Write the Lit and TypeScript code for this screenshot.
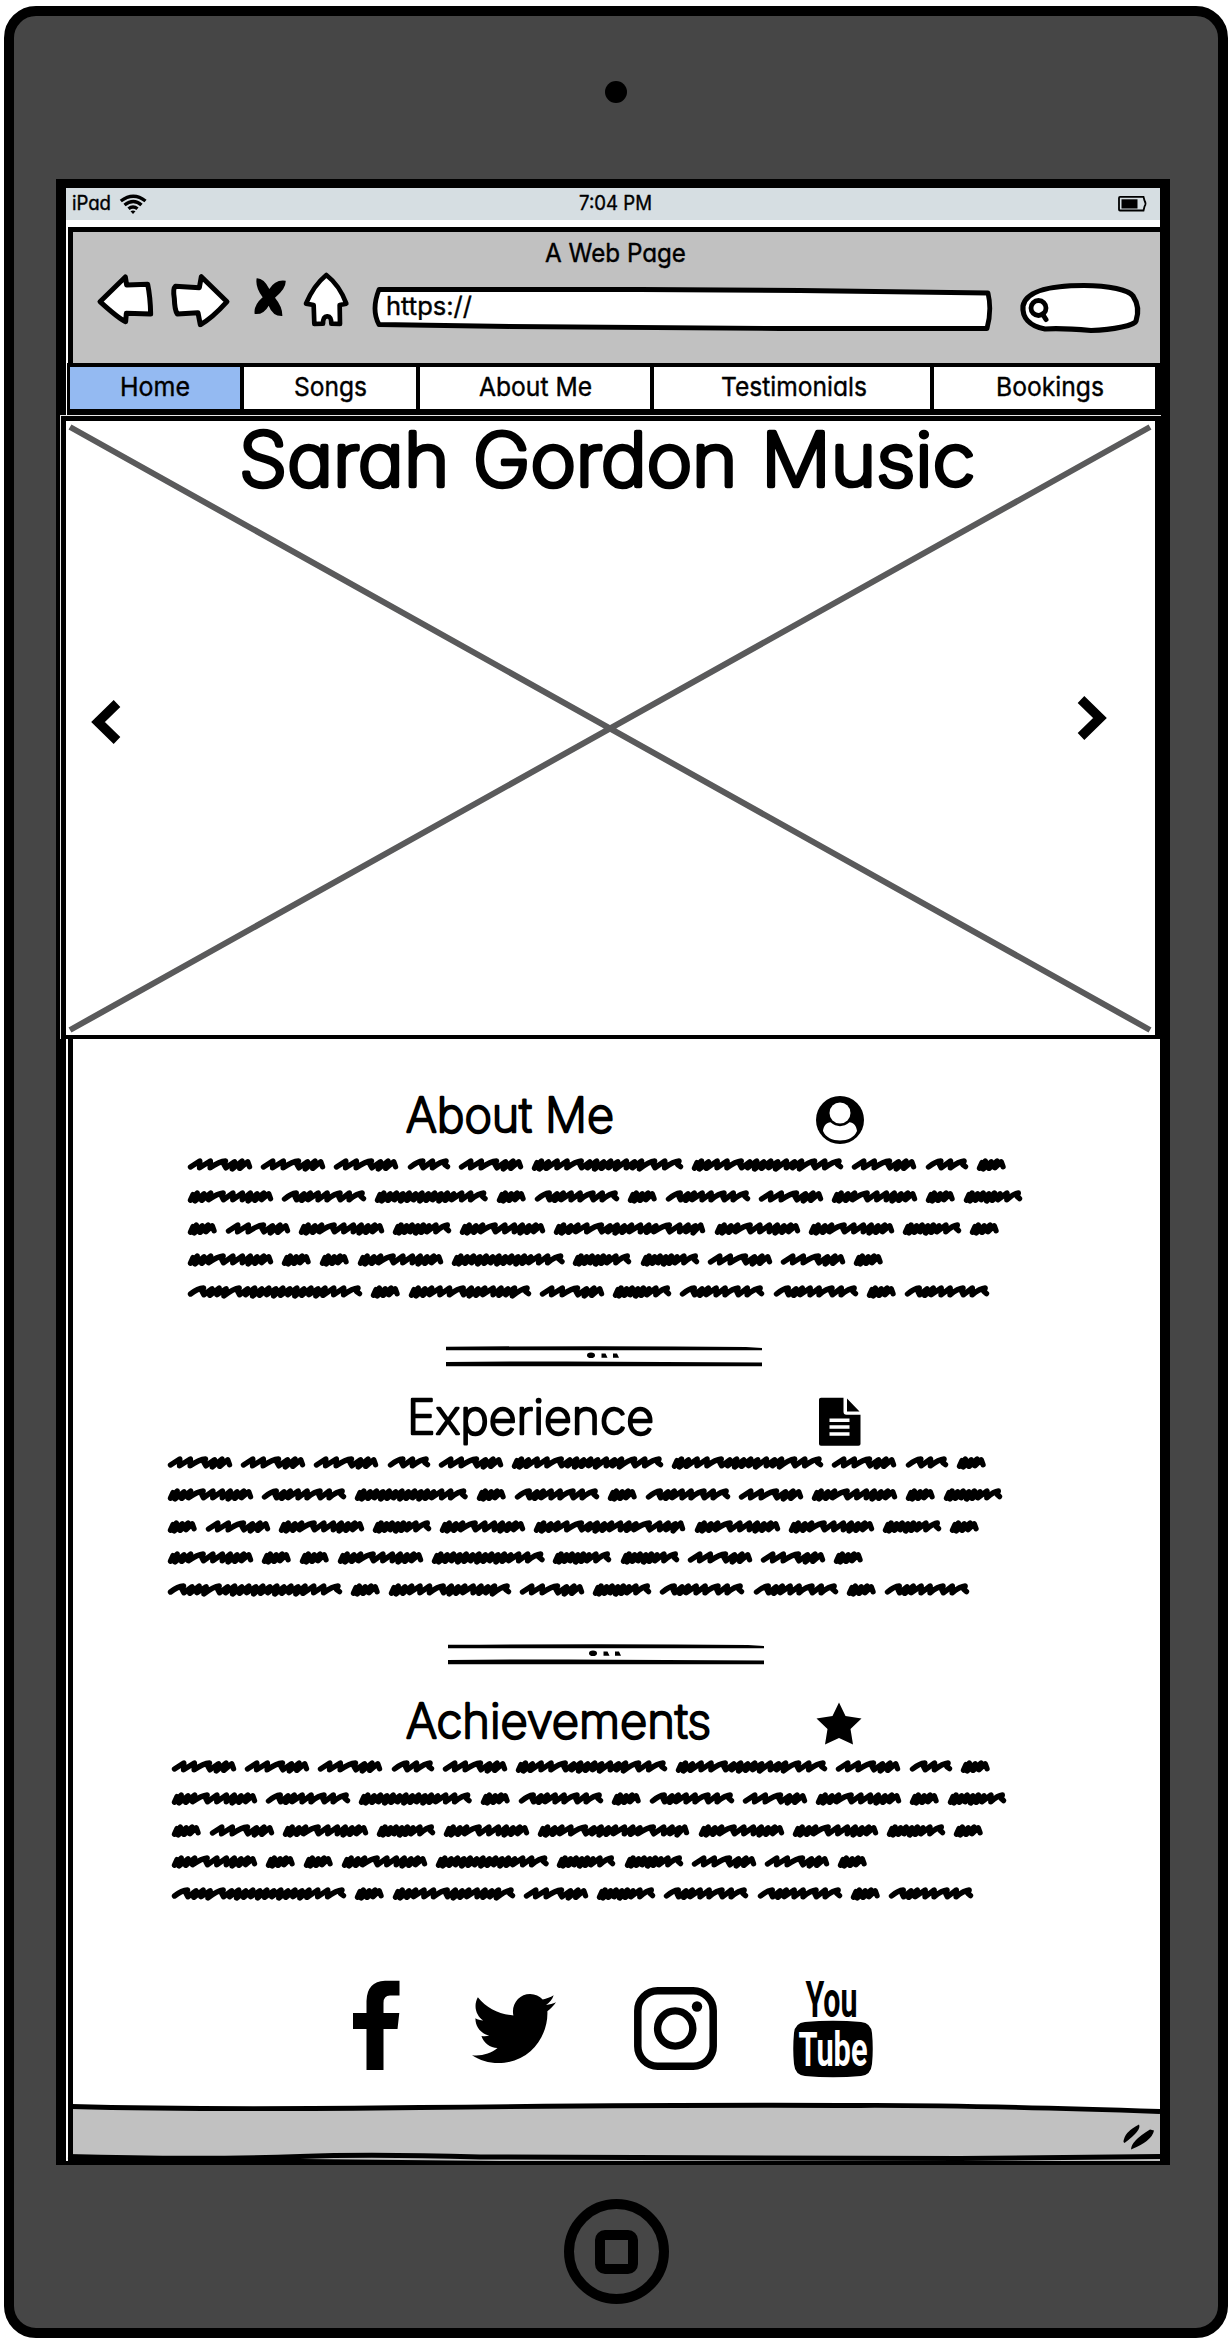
import { LitElement, html, svg, css } from "lit";
import { customElement } from "lit/decorators.js";

/* Draws a label as SVG text set to an exact width. */
const label = (text: string, width: number, size: number, cls = "") => html`
  <svg class="label ${cls}" width=${width} height=${size} viewBox="0 0 ${width} ${size}">
    <text x="0" y=${size * 0.75} font-size=${size} textLength=${width} lengthAdjust="spacingAndGlyphs">${text}</text>
  </svg>`;

/* Scribble strokes: l = slanted stroke, h = humped stroke, d = dense stroke. */
const WORDS: Record<string, [string, number]> = {
  A: ["llhddd", 64],
  B: ["hlh", 42],
  C: ["ddllhdddddlddhlh", 151],
  D: ["hddllhlh", 84],
  E: ["dddhlldddd", 85],
  F: ["ddddddddddddllh", 112.5],
  G: ["dddd", 28.5],
  H: ["ddddddlh", 58],
  I: ["dddlhddddlddhlddd", 151],
  J: ["hdddhddddddddddddllh", 174],
  K: ["dddllhdddldddh", 122],
};

const LINES = ["AAABACCABG", "EDFGDGDAEGH", "GAEHEIEEHG", "EGGEFHHAAG", "JGKAHDDGD"];

const scribble = (key: string) => {
  const [strokes, width] = WORDS[key];
  const pitch: Record<string, number> = { l: 8.2, h: 12, d: 5.8 };
  const total = [...strokes].reduce((s, c) => s + pitch[c], 0);
  const k = (width - 5) / total;
  let x = 2.5;
  let d = strokes[0] === "d" ? `M${x + 2.5} 4.6L${x} 10.2` : `M${x} 9`;
  [...strokes].forEach((c, i) => {
    const w = pitch[c] * k;
    const last = i === strokes.length - 1;
    if (c === "d") {
      const top = 3 + (i % 2) * 0.8;
      const low = 11 - (i % 3) * 0.6;
      d += last ? `L${x + w - 1.8} ${top}L${x + w} 8.6` : `L${x + w} ${top}L${x + w - 2.2} ${low}`;
    } else if (c === "l") {
      d += `L${x + w * 0.88} 3L${x + w * (last ? 1 : 0.86)} ${last ? 8.6 : 9.8}`;
    } else {
      d += `Q${x + w * 0.5} 3.4 ${x + w * 0.9} 3L${x + w * 0.8} 6.500L${x + w * (last ? 1 : 0.92)} ${last ? 8.6 : 9.8}`;
    }
    x += w;
  });
  return html`<svg width=${width} height="14" viewBox="0 0 ${width} 14">
    <path d=${d} fill="none" stroke="#000" stroke-width="5.400" stroke-linecap="round" stroke-linejoin="round" />
  </svg>`;
};

const paragraph = () => html`<div class="para">
  ${LINES.map((line) => html`<div class="line">${[...line].map(scribble)}</div>`)}
</div>`;

const divider = () => html`<svg width="316" height="21" viewBox="0 0 316 21">
  <path d="M0 .8Q170 -.6 300 1L316 2V4.2H0zM0 16Q60 15 120 15.6L316 16.4V20.2H0z" />
  <ellipse cx="145" cy="9.2" rx="4" ry="2.800" />
  <path d="M155.500 7.500h4l2 4.300h-6zM167 7.500h4l2 4.300h-6z" />
</svg>`;

@customElement("app-root")
export class AppRoot extends LitElement {
  static styles = css`
    :host {
      display: block;
      width: 1232px;
      height: 2342px;
      overflow: hidden;
      background: #fff;
      font-family: Inter, "Open Sans", sans-serif;
    }
    * { box-sizing: border-box; }
    svg { display: block; flex: none; overflow: visible; }
    .label {
      font-weight: 400;
      font-feature-settings: "cv11";
      fill: #000;
      stroke: #000;
      stroke-width: 0.4;
      stroke-linejoin: round;
    }
    .title { font-weight: 200; stroke-width: 4.6; word-spacing: 2px; }
    .heading { font-weight: 200; stroke-width: 2.5; }
    .device {
      width: 1224px;
      height: 2332px;
      margin: 6px 4px 0;
      border: 10px solid #000;
      border-radius: 32px;
      background: #464646;
      display: flex;
      flex-direction: column;
      align-items: center;
    }
    .camera { width: 22px; height: 22px; border-radius: 50%; background: #000; margin-top: 65px; flex: none; }
    .screen {
      width: 1114px;
      height: 1986px;
      flex: none;
      margin-top: 76px;
      margin-right: 6px;
      border: solid #000;
      border-width: 9px 10px 4px;
      background: #fff;
      display: flex;
      flex-direction: column;
    }
    .status {
      height: 32px;
      flex: none;
      background: #d6dee2;
      display: grid;
      grid-template-columns: 1fr 72px 1fr;
      padding: 7px 13px 0 14px;
    }
    .status-left { display: flex; gap: 9px; margin-left: -8px; }
    .clock { margin-left: 1px; }
    .status-right { display: flex; justify-content: flex-end; }
    .chrome {
      margin: 7px 0 0 2px;
      height: 136px;
      flex: none;
      border: solid #000;
      border-width: 5px 0 0 5px;
      background: #c1c1c1;
      padding-top: 11px;
    }
    .page-title { display: flex; margin-left: 472px; height: 29px; }
    .toolbar { display: flex; align-items: flex-start; padding-left: 24px; }
    .fwd { margin-left: 16.700px; }
    .stop { margin-left: 21.700px; }
    .house { margin-left: 15px; }
    .url { display: grid; margin: 14px 0 0 23px; }
    .url > * { grid-area: 1 / 1; }
    .url-text { margin: 9.500px 0 0 13px; }
    .find { margin: 11px 0 0 27px; }
    .nav {
      height: 52px;
      flex: none;
      margin-left: 1px;
      background: #000;
      padding: 4px 5px 6px 3px;
      display: grid;
      grid-template-columns: 170px 172px 230px 276px 1fr;
      gap: 4px;
    }
    .tab { background: #fff; display: flex; justify-content: center; padding-top: 9px; }
    .tab.active { background: #94baf2; }
    .tab:nth-child(4) { padding-left: 3px; }
    .tab:nth-child(5) { padding-left: 10px; }
    .carousel {
      height: 624px;
      flex: none;
      width: 1101px;
      margin-left: -6px;
      border: 1px solid #e8e8e8;
      border-width: 1px 0 0 1px;
      position: relative;
    }
    .frame {
      height: 623px;
      width: 1099px;
      border: solid #000;
      border-width: 5px 5px 4px 5px;
      background: #fff;
      display: grid;
    }
    .frame > * { grid-area: 1 / 1; }
    .hero { display: flex; margin: 8.500px 0 0 173px; }
    .arrows { display: flex; justify-content: space-between; align-items: flex-start; padding: 275px 49px 0 26px; }
    .arrows svg:first-child { margin-top: 4px; }
    .content {
      height: 1065px;
      flex: none;
      margin-left: 2px;
      border-left: 5px solid #000;
      background: #fff;
      display: flex;
      flex-direction: column;
      align-items: flex-start;
    }
    .about { margin-top: 57px; }
    .experience { margin-top: 30px; }
    .achievements { margin-top: 37px; }
    .head { display: flex; padding-left: 332.500px; }
    .about .head { height: 62px; }
    .experience .head { height: 59px; padding-left: 333.500px; }
    .achievements .head { height: 58px; }
    .name { width: 410.500px; }
    .about .name { width: 410px; }
    .experience .name { width: 412.500px; padding-top: 1px; }
    .about .para { margin-left: 115px; }
    .experience .para { margin-left: 95px; }
    .achievements .para { margin-left: 99px; }
    .para { height: 141px; display: flex; flex-direction: column; justify-content: space-between; }
    .line { display: flex; gap: 9.200px; }
    .rule1 { margin: 47px 0 0 373px; }
    .rule2 { margin: 47px 0 0 375px; }
    .social { display: flex; margin: 79px 0 0 280px; align-items: flex-start; }
    .tw { margin: 14px 0 0 71.500px; }
    .ig { margin: 7px 0 0 78px; }
    .yt { margin-left: 76px; }
    .yt text { font-family: Roboto, sans-serif; font-weight: 700; }
    .footer { flex: none; }
    .home {
      width: 105px;
      height: 105px;
      flex: none;
      margin-top: 34px;
      border: 10px solid #000;
      border-radius: 50%;
      display: grid;
      place-items: center;
    }
    .key { width: 43px; height: 44px; border: 10px solid #000; border-radius: 10px; }
  `;

  private tabs: [string, number][] = [
    ["Home", 70],
    ["Songs", 73],
    ["About Me", 113],
    ["Testimonials", 146],
    ["Bookings", 108],
  ];

  private icons = {
    user: svg`<svg width="49" height="49" viewBox="0 0 49 49">
      <circle cx="24" cy="24" r="24" />
      <circle cx="24" cy="17" r="10.500" fill="#fff" />
      <path d="M7 35C7.500 30 10.500 26.500 14.500 26.300Q24 34 33.500 26.300C37.500 26.500 40.500 30 41 35C38.500 41.500 31.500 44.500 24 44.500C16.500 44.500 9.500 41.500 7 35z" fill="#fff" />
    </svg>`,
    file: svg`<svg width="42" height="50" viewBox="0 0 42 50">
      <path d="M2 .8H24.500V14.500Q24.500 17.800 27.500 17.800H41.500V47Q41.500 48.800 39.500 48.800H2Q0 48.800 0 47V2.500Q0 .8 2 .8zM28 1.500L40.500 14.500H28z" />
      <path d="M10.500 23.200h20M10.500 30h20M10.500 37h20" stroke="#fff" stroke-width="3.400" />
    </svg>`,
    star: svg`<svg width="46" height="44" viewBox="0 0 46 44">
      <path d="M23 .5L29.500 14L45.500 16.500L34.500 27L37 42.500L23 36L9 42.500L11.500 27L.5 16.500L16.500 14z" />
    </svg>`,
  };

  private section(cls: string, name: string, width: number, icon: unknown) {
    return html`<section class=${cls}>
      <div class="head"><div class="name">${label(name, width, 48, "heading")}</div>${icon}</div>
      ${paragraph()}
    </section>`;
  }

  render() {
    return html`<div class="device">
      <div class="camera"></div>
      <div class="screen">
        <div class="status">
          <div class="status-left">
            ${label("iPad", 39, 20)}
            <svg width="27" height="19" viewBox="0 0 27 19">
              <g fill="none" stroke="#000" stroke-width="3.400">
                <path d="M.8 6Q13.500 -3.500 25.500 6" /><path d="M4.500 10Q13.500 3 21.500 10" />
                <path d="M8.500 13.800Q13 10 17.500 13.800" />
              </g>
              <path d="M10.500 16.200Q13 14.800 15.500 16.200L13 19z" />
            </svg>
          </div>
          <div class="clock">${label("7:04 PM", 73, 20)}</div>
          <div class="status-right">
            <svg width="29" height="17" viewBox="0 0 29 17">
              <path d="M2 1.800H25.500L26.500 5.500Q28.500 8.500 26.500 11.500L25.500 15.500H2Q1 15.500 1 14.500V3Q1 1.800 2 1.800z" fill="none" stroke="#000" stroke-width="1.800" />
              <path d="M3.500 4.300H19.500V13.500H3.500z" />
            </svg>
          </div>
        </div>
        <div class="chrome">
          <div class="page-title">${label("A Web Page", 141, 25.500)}</div>
          <div class="toolbar">
            <svg width="56.670" height="56" viewBox="140 305 170 168">
              <path d="M149 394L225 320L229 344L292 342Q300 380 301 431L228 429L226 454Q205 445 149 394z" fill="#fff" stroke="#000" stroke-width="15" stroke-linejoin="round" />
            </svg>
            <svg class="fwd" width="60" height="56" viewBox="360 305 180 168">
              <path d="M531 394L454 319L448 352L376 348Q368 355 373 385Q374 420 382 431L444 427L451 463Q485 445 531 394z" fill="#fff" stroke="#000" stroke-width="15" stroke-linejoin="round" />
            </svg>
            <svg class="stop" width="35" height="56" viewBox="605 305 105 168">
              <path d="M619 324Q640 323 657 356Q675 326 706 331Q708 355 674 382Q697 410 696 437Q667 438 655 406Q640 434 613 431Q609 405 637 381Q614 350 619 324z" />
            </svg>
            <svg class="house" width="48.330" height="56" viewBox="755 305 145 168">
              <path d="M828 314Q868 345 888 400L868 404L869 461L843 460Q843 437 831 438Q818 437 818 460L792 461L790 404L767 400Q790 345 828 314z" fill="#fff" stroke="#000" stroke-width="14" stroke-linejoin="round" />
            </svg>
            <div class="url">
              <svg width="620" height="46" viewBox="373 286 620 46">
                <path d="M379 289.500H640L800 290.500L988 293Q992 310 987 328.500H780L510 326.500L379 324.500Q371 310 379 289.500z" fill="#fff" stroke="#000" stroke-width="4.800" stroke-linejoin="round" />
              </svg>
              <div class="url-text">${label("https://", 86, 25.500)}</div>
            </div>
            <svg class="find" width="120" height="50" viewBox="1021 283 120 50">
              <path d="M1046 329C1030 326 1023 317 1024 306C1027 290 1055 285.500 1085 285.500C1110 285.500 1130 290 1134 296C1140 305 1139 315 1137 321C1136 325 1115 330 1092 330.500C1075 329 1060 328 1046 329z" fill="#fff" stroke="#000" stroke-width="5.200" />
              <circle cx="1039.500" cy="308" r="7.500" fill="none" stroke="#000" stroke-width="4.800" />
              <path d="M1043.500 314L1047 319.500" stroke="#000" stroke-width="5" stroke-linecap="round" />
            </svg>
          </div>
        </div>
        <div class="nav">
          ${this.tabs.map(([t, w], i) => html`<div class="tab ${i === 0 ? "active" : ""}">${label(t, w, 26)}</div>`)}
        </div>
        <div class="carousel">
          <div class="frame">
            <svg width="1089" height="614" viewBox="66 421 1089 614">
              <path d="M70 427L1150 1030M1150 427L70 1030" stroke="#5a5a5b" stroke-width="6" />
            </svg>
            <div class="hero">${label("Sarah Gordon Music", 736, 74, "title")}</div>
            <div class="arrows">
              <svg width="29" height="44" viewBox="0 0 29 44"><path d="M25 3.500L6 22L25 40.500" fill="none" stroke="#000" stroke-width="9.500" /></svg>
              <svg width="29" height="44" viewBox="0 0 29 44"><path d="M4 3.500L23 22L4 40.500" fill="none" stroke="#000" stroke-width="9.500" /></svg>
            </div>
          </div>
        </div>
        <div class="content">
          ${this.section("about", "About Me", 208, this.icons.user)}
          <div class="rule1">${divider()}</div>
          ${this.section("experience", "Experience", 247, this.icons.file)}
          <div class="rule2">${divider()}</div>
          ${this.section("achievements", "Achievements", 305, this.icons.star)}
          <div class="social">
            <svg width="47" height="90" viewBox="0 0 47 90">
              <path d="M46.500 .8V15.500H37Q30.500 15.500 30.500 23V33H46.300L44.500 49H30.500V90H13.500V49H0V33H13.500V21Q14 1.500 32 .8z" />
            </svg>
            <svg class="tw" width="84" height="69" viewBox="0 48 512 416" preserveAspectRatio="none">
              <path d="M459.370 151.716c.325 4.548.325 9.097.325 13.645 0 138.720-105.583 298.558-298.558 298.558-59.452 0-114.680-17.219-161.137-47.106 8.447.974 16.568 1.299 25.340 1.299 49.055 0 94.213-16.568 130.274-44.832-46.132-.975-84.792-31.188-98.112-72.772 6.498.974 12.995 1.624 19.818 1.624 9.421 0 18.843-1.300 27.614-3.573-48.081-9.747-84.143-51.980-84.143-102.985v-1.299c13.969 7.797 30.214 12.670 47.431 13.319-28.264-18.843-46.781-51.005-46.781-87.391 0-19.492 5.197-37.360 14.294-52.954 51.655 63.675 129.300 105.258 216.365 109.807-1.624-7.797-2.599-15.918-2.599-24.040 0-57.828 46.782-104.934 104.934-104.934 30.213 0 57.502 12.670 76.670 33.137 23.715-4.548 46.456-13.320 66.599-25.340-7.798 24.366-24.366 44.833-46.132 57.827 21.117-2.273 41.584-8.122 60.426-16.243-14.292 20.791-32.161 39.308-52.628 54.253z" />
            </svg>
            <svg class="ig" width="83" height="83" viewBox="0 0 83 83">
              <rect x="3.800" y="3.800" width="75.400" height="75.400" rx="20" fill="none" stroke="#000" stroke-width="7.500" />
              <circle cx="41.200" cy="41.500" r="17.600" fill="none" stroke="#000" stroke-width="7.400" />
              <circle cx="63" cy="19.500" r="5.200" />
            </svg>
            <svg class="yt" width="80" height="98" viewBox="0 0 80 98">
              <text x="12.500" y="37" font-size="50" textLength="52" lengthAdjust="spacingAndGlyphs">You</text>
              <path d="M12 42Q40 39.500 68 42Q78 43 79 53Q80.500 69 79 84Q78 95 68 96Q40 98.500 12 96Q2 95 1 84Q-.5 69 1 53Q2 43 12 42z" />
              <text x="5.500" y="86" font-size="49" textLength="69" lengthAdjust="spacingAndGlyphs" fill="#fff">Tube</text>
            </svg>
          </div>
        </div>
        <svg class="footer" width="1094" height="57" viewBox="66 2104 1094 57">
          <path d="M73 2107Q200 2110 400 2108Q700 2104 900 2105.500Q1000 2106 1160 2112V2161H73z" fill="#c1c1c1" />
          <path d="M70.500 2104V2161" stroke="#000" stroke-width="5" />
          <path d="M72 2106.500Q200 2110 420 2107.500Q700 2104.500 860 2105.500Q960 2105 1160 2111.500" fill="none" stroke="#000" stroke-width="4.800" />
          <path d="M68 2156.500Q200 2160 300 2156.500Q370 2154 480 2157Q700 2158.500 960 2158.500L1160 2156.500" fill="none" stroke="#000" stroke-width="5" />
          <path d="M68 2161V2157L250 2158.500L500 2161z" />
          <path d="M1123.500 2142Q1124 2132 1139 2124.500Q1142 2130 1124.500 2143zM1131 2149.500Q1131 2141 1150 2129.500L1154 2130.500Q1152 2141 1131 2149.500z" />
        </svg>
      </div>
      <div class="home"><div class="key"></div></div>
    </div>`;
  }
}
